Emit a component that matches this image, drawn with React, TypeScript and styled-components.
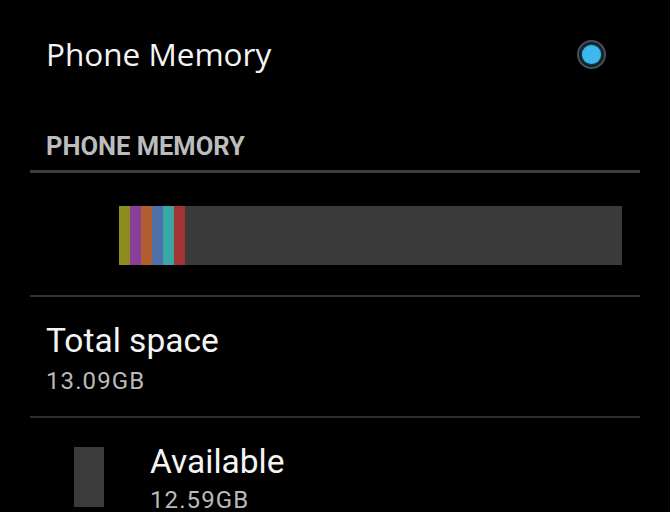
import * as React from "react";
import styled, {createGlobalStyle} from "styled-components";

const GlobalStyle = createGlobalStyle`
  html, body {
    margin: 0;
    padding: 0;
    background: #000;
  }
  body {
    font-family: Roboto, "Noto Sans", sans-serif;
    color: #f2f2f2;
  }
`;

const Page = styled.div`
  width: 670px;
  height: 512px;
  overflow: hidden;
  padding: 0 30px;
  box-sizing: border-box;
  background: #000;
`;

const RadioRow = styled.div`
  height: 108px;
  display: flex;
  align-items: center;
  justify-content: space-between;
  padding: 0 34px 0 16px;
`;

const RowTitle = styled.div`
  font-family: "Open Sans", Roboto, sans-serif;
  font-size: 31.5px;
  line-height: 38px;
  color: #f4f4f4;
`;

const Radio = styled.div`
  width: 29px;
  height: 29px;
  border-radius: 50%;
  border: 2px solid #4a4f55;
  background: #0b1014;
  box-sizing: border-box;
  display: flex;
  align-items: center;
  justify-content: center;
`;

const RadioDot = styled.div`
  width: 19px;
  height: 19px;
  border-radius: 50%;
  background: #3cb8ec;
  box-shadow: 0 0 4px rgba(51, 181, 229, 0.7);
`;

const SectionHeader = styled.div`
  padding: 23px 16px 9px;
  font-size: 25.5px;
  line-height: 30px;
  font-weight: 700;
  color: #bcbcbc;
  border-bottom: 3px solid #3c3c3c;
`;

const BarArea = styled.div`
  padding: 33px 18px 30px 89px;
  border-bottom: 2px solid #333;
`;

const Bar = styled.div`
  display: flex;
  height: 59px;
  background: #3a3a3a;
`;

const Segment = styled.div<{ $color: string }>`
  width: 11px;
  height: 100%;
  background: ${p => p.$color};
`;

const Item = styled.div<{ $divider?: boolean }>`
  display: flex;
  align-items: flex-start;
  padding: 25px 16px 21px;
  border-bottom: ${p => (p.$divider ? "2px solid #2e2e2e" : "none")};
`;

const Swatch = styled.div`
  width: 30px;
  height: 60px;
  margin: 4px 46px 0 28px;
  background: #3b3b3b;
  flex-shrink: 0;
`;

const ItemText = styled.div<{ $gap: number }>`
  display: flex;
  flex-direction: column;
  gap: ${p => p.$gap}px;
`;

const ItemTitle = styled.div`
  font-size: 33.5px;
  line-height: 38px;
  color: #f4f4f4;
`;

const ItemValue = styled.div`
  font-size: 24px;
  line-height: 28px;
  letter-spacing: 1.1px;
  color: #bababa;
`;

const segments = ["#8c8c1f", "#8a3f9a", "#b0602e", "#4f6fa8", "#3aa6a6", "#a33434"];

export default function App() {
    return (
        <Page>
            <GlobalStyle />
            <RadioRow>
                <RowTitle>Phone Memory</RowTitle>
                <Radio>
                    <RadioDot />
                </Radio>
            </RadioRow>
            <SectionHeader>PHONE MEMORY</SectionHeader>
            <BarArea>
                <Bar>
                    {segments.map(c => (
                        <Segment key={c} $color={c} />
                    ))}
                </Bar>
            </BarArea>
            <Item $divider>
                <ItemText $gap={7}>
                    <ItemTitle>Total space</ItemTitle>
                    <ItemValue>13.09GB</ItemValue>
                </ItemText>
            </Item>
            <Item>
                <Swatch />
                <ItemText $gap={5}>
                    <ItemTitle>Available</ItemTitle>
                    <ItemValue>12.59GB</ItemValue>
                </ItemText>
            </Item>
        </Page>
    );
}
